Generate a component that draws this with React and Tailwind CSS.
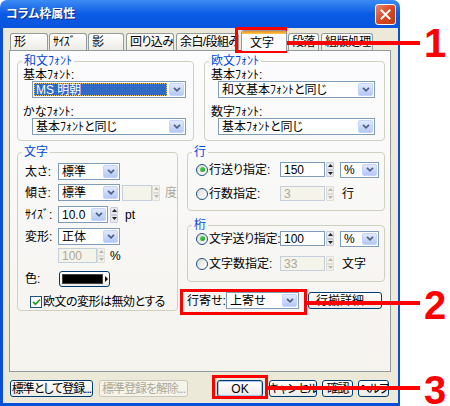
import React from 'react';

// XP-style dialog widgets, all 12px text
function Chevron() {
  return (
    <svg width="8" height="5" viewBox="0 0 8 5">
      <path d="M1 0.8 L4 3.8 L7 0.8" fill="none" stroke="#4D6185" strokeWidth="1.7" />
    </svg>
  );
}

function DropBtn() {
  return (
    <span className="flex w-[15px] shrink-0 items-center justify-center rounded-[2px] border border-[#C3D3FD] bg-gradient-to-b from-[#E1EAFE] to-[#B4C8F6]">
      <Chevron />
    </span>
  );
}

function Select({ text, className = '', selected = false }) {
  return (
    <div className={`flex border border-[#7F9DB9] bg-white p-[1px] ${className}`}>
      <span className="flex min-w-0 flex-1 items-center pr-[2px]">
        {selected ? (
          <span className="flex h-full w-full items-center bg-[#316AC5] pl-[2px] text-white outline-1 outline-dotted -outline-offset-1 outline-[#E8C56B]">
            {text}
          </span>
        ) : (
          <span className="pl-[2px]">{text}</span>
        )}
      </span>
      <DropBtn />
    </div>
  );
}

function Field({ text = '', className = '', off = false }) {
  return (
    <div
      className={`flex items-center border pl-[3px] ${
        off ? 'border-[#C3CFDD] bg-[#F5F4EA] text-[#ACA899]' : 'border-[#7F9DB9] bg-white'
      } ${className}`}
    >
      {text}
    </div>
  );
}

function Arrow({ up = false, off = false }) {
  return (
    <svg width="5" height="3" viewBox="0 0 5 3">
      <path d={up ? 'M0 3 L2.5 0 L5 3 Z' : 'M0 0 L2.5 3 L5 0 Z'} fill={off ? '#B9B7AB' : '#222'} />
    </svg>
  );
}

function Spin({ className = '', off = false }) {
  const half = off
    ? 'flex flex-1 items-center justify-center rounded-[1px] border border-[#DDDDD6] bg-[#F3F2EC]'
    : 'flex flex-1 items-center justify-center rounded-[1px] border border-[#C9CBD8] bg-[#E9EAF0]';
  return (
    <div className={`flex flex-col ${className}`}>
      <span className={half}>
        <Arrow up off={off} />
      </span>
      <span className={half}>
        <Arrow off={off} />
      </span>
    </div>
  );
}

function Radio({ on = false }) {
  return (
    <span className="flex h-[12px] w-[12px] shrink-0 items-center justify-center rounded-full border border-[#1C5180] bg-gradient-to-br from-[#DCDBD5] to-white">
      {on && <span className="h-[5px] w-[5px] rounded-full bg-gradient-to-br from-[#5BD957] to-[#1C9A1A]" />}
    </span>
  );
}

function Check() {
  return (
    <span className="flex h-[12px] w-[12px] shrink-0 items-center justify-center border border-[#1C5180] bg-white">
      <svg width="9" height="8" viewBox="0 0 9 8">
        <path d="M1 3.8 L3.5 6.3 L8 1.5" fill="none" stroke="#21A121" strokeWidth="1.8" />
      </svg>
    </span>
  );
}

function Btn({ children, className = '', off = false, def = false }) {
  const look = off
    ? 'border-[#C9C7BA] bg-[#F5F4EA] text-[#ACA899]'
    : def
    ? 'border-[#003C74] bg-gradient-to-b from-white to-[#ECEBE6] shadow-[inset_0_0_0_1px_#A9C2EE]'
    : 'border-[#003C74] bg-gradient-to-b from-white to-[#ECEBE6]';
  return (
    <div className={`flex items-center justify-center overflow-hidden rounded-[3px] border ${look} ${className}`}>
      {children}
    </div>
  );
}

function Group({ title, className = '', children }) {
  return (
    <fieldset className={`rounded-[4px] border border-[#D0D0BF] ${className}`}>
      <legend className="ml-[4px] px-[2px] leading-[12px] text-[#0046D5]">{title}</legend>
      {children}
    </fieldset>
  );
}

function Tab({ children, className = '' }) {
  return (
    <div
      className={`flex h-[17px] items-center overflow-hidden rounded-t-[3px] border border-b-0 border-[#919B9C] bg-gradient-to-b from-white to-[#ECEBE6] pl-[3px] tracking-[-0.6px] ${className}`}
    >
      {children}
    </div>
  );
}

function CloseBtn() {
  return (
    <div className="flex h-[21px] w-[21px] items-center justify-center rounded-[3px] border border-white bg-gradient-to-br from-[#E9836A] via-[#D9471F] to-[#C33B16]">
      <svg width="11" height="11" viewBox="0 0 11 11">
        <path d="M1.5 1.5 L9.5 9.5 M9.5 1.5 L1.5 9.5" stroke="white" strokeWidth="2" strokeLinecap="square" />
      </svg>
    </div>
  );
}

export default function App() {
  return (
    <div className="relative h-[406px] w-[450px] overflow-hidden whitespace-nowrap bg-white font-['Liberation_Sans','Noto_Sans_CJK_JP',sans-serif] text-[12px] leading-[12px] text-black [font-feature-settings:'palt']">
      {/* window frame */}
      <div className="flex h-[406px] w-[400px] flex-col">
        <div className="flex h-[28px] shrink-0 items-center justify-between rounded-t-[7px] bg-gradient-to-b from-[#3D8BF4] via-[#0A5BE6] to-[#0A55DC] pl-[6px] pr-[4px]">
          <span className="font-bold text-white [text-shadow:1px_1px_0_#0B2A8A]">コラム枠属性</span>
          <CloseBtn />
        </div>

        <div className="flex flex-1 bg-[#0A4FD8] pb-[3px] pl-[3px] pr-[4px]">
          <div className="flex flex-1 flex-col bg-[#ECE9D8] pl-[6px] pr-[7px] pt-[2px]">
            {/* tabs */}
            <div className="flex h-[20px] items-end pl-[1px]">
              <Tab className="w-[38px]">形</Tab>
              <Tab className="ml-[1px] w-[38px]">ｻｲｽﾞ</Tab>
              <Tab className="ml-[1px] w-[36px]">影</Tab>
              <Tab className="ml-[2px] w-[48px]">回り込み</Tab>
              <Tab className="ml-[2px] w-[63px]">余白/段組み</Tab>
              <div className="relative z-10 -mb-[1px] ml-[2px] flex h-[21px] w-[46px] flex-col overflow-hidden rounded-t-[3px] border border-b-0 border-[#919B9C] bg-[#FCFCFE]">
                <div className="h-[3px] bg-gradient-to-b from-[#E68B2C] to-[#FFC83C]" />
                <div className="flex flex-1 items-center pl-[8px]">文字</div>
              </div>
              <Tab className="ml-[1px] w-[31px]">段落</Tab>
              <Tab className="ml-[2px] w-[52px]">組版処理</Tab>
            </div>

            {/* tab page */}
            <div className="h-[322px] border border-[#919B9C] bg-gradient-to-b from-[#FCFCFE] to-[#F4F3EE] pl-[7px] pr-[5px] pt-[4px]">
              <div className="grid grid-cols-[177px_181px] gap-x-[10px]">
                <Group title="和文ﾌｫﾝﾄ">
                  <div className="pb-[5px] pl-[5px] pr-[7px]">
                    <div className="mt-[2px]">基本ﾌｫﾝﾄ:</div>
                    <Select selected text="MS 明朝" className="ml-[9px] h-[17px]" />
                    <div className="mt-[8px]">かなﾌｫﾝﾄ:</div>
                    <Select text="基本ﾌｫﾝﾄと同じ" className="ml-[9px] h-[17px]" />
                  </div>
                </Group>
                <Group title="欧文ﾌｫﾝﾄ">
                  <div className="pb-[5px] pl-[6px] pr-[9px]">
                    <div className="mt-[2px]">基本ﾌｫﾝﾄ:</div>
                    <Select text="和文基本ﾌｫﾝﾄと同じ" className="ml-[7px] h-[17px]" />
                    <div className="mt-[8px]">数字ﾌｫﾝﾄ:</div>
                    <Select text="基本ﾌｫﾝﾄと同じ" className="ml-[7px] h-[17px]" />
                  </div>
                </Group>
              </div>

              <div className="mt-[5px] flex gap-x-[9px]">
                <Group title="文字" className="w-[161px]">
                  <div className="flex flex-col pl-[7px]">
                    <div className="mt-[5px] flex h-[17px] items-center">
                      <span className="w-[33px]">太さ:</span>
                      <Select text="標準" className="h-full w-[62px]" />
                    </div>
                    <div className="mt-[4px] flex h-[17px] items-center">
                      <span className="w-[33px]">傾き:</span>
                      <Select text="標準" className="h-full w-[62px]" />
                      <Field off className="ml-[2px] h-[16px] w-[30px]" />
                      <Spin off className="h-[16px] w-[8px]" />
                      <span className="ml-[5px] text-[#ACA899]">度</span>
                    </div>
                    <div className="mt-[5px] flex h-[17px] items-center">
                      <span className="w-[33px]">ｻｲｽﾞ:</span>
                      <Select text="10.0" className="h-full w-[50px]" />
                      <Spin className="ml-[2px] h-[16px] w-[8px]" />
                      <span className="ml-[7px]">pt</span>
                    </div>
                    <div className="mt-[5px] flex h-[17px] items-center">
                      <span className="w-[33px]">変形:</span>
                      <Select text="正体" className="h-full w-[62px]" />
                    </div>
                    <div className="mt-[3px] flex h-[15px] items-center">
                      <span className="w-[33px]" />
                      <Field off text="100" className="h-full w-[39px]" />
                      <Spin off className="h-full w-[8px]" />
                      <span className="ml-[5px]">%</span>
                    </div>
                    <div className="mt-[7px] flex h-[17px] items-center">
                      <span className="w-[33px]">色:</span>
                      <div className="ml-[1px] flex h-[16px] w-[51px] items-center rounded-[3px] border border-[#003C74] bg-gradient-to-b from-white to-[#ECEBE6] pl-[2px]">
                        <span className="h-[10px] w-[41px] border border-[#444] bg-black" />
                        <svg className="ml-[2px]" width="3" height="6" viewBox="0 0 3 6">
                          <path d="M0 0 L3 3 L0 6 Z" fill="black" />
                        </svg>
                      </div>
                    </div>
                    <div className="mt-[6px] flex h-[17px] items-center pl-[5px]">
                      <Check />
                      <span className="ml-[1px] tracking-[-0.5px]">欧文の変形は無効とする</span>
                    </div>
                  </div>
                </Group>

                <div className="w-[198px]">
                  <Group title="行">
                    <div className="pb-[9px] pl-[8px]">
                      <div className="mt-[4px] flex h-[15px] items-center">
                        <Radio on />
                        <span className="ml-[1px] w-[71px]">行送り指定:</span>
                        <Field text="150" className="h-full w-[45px]" />
                        <Spin className="ml-[1px] h-full w-[8px]" />
                        <Select text="%" className="ml-[6px] h-[16px] w-[39px]" />
                      </div>
                      <div className="mt-[9px] flex h-[15px] items-center">
                        <Radio />
                        <span className="ml-[1px] w-[71px]">行数指定:</span>
                        <Field off text="3" className="h-full w-[45px]" />
                        <Spin off className="ml-[1px] h-full w-[8px]" />
                        <span className="ml-[8px]">行</span>
                      </div>
                    </div>
                  </Group>
                  <Group title="桁" className="mt-[8px]">
                    <div className="pb-[10px] pl-[8px]">
                      <div className="flex h-[15px] items-center">
                        <Radio on />
                        <span className="ml-[1px] w-[71px] tracking-[-0.3px]">文字送り指定:</span>
                        <Field text="100" className="h-full w-[45px]" />
                        <Spin className="ml-[1px] h-full w-[8px]" />
                        <Select text="%" className="ml-[6px] h-[16px] w-[39px]" />
                      </div>
                      <div className="mt-[10px] flex h-[15px] items-center">
                        <Radio />
                        <span className="ml-[1px] w-[71px]">文字数指定:</span>
                        <Field off text="33" className="h-full w-[45px]" />
                        <Spin off className="ml-[1px] h-full w-[8px]" />
                        <span className="ml-[8px]">文字</span>
                      </div>
                    </div>
                  </Group>
                  <div className="mt-[10px] flex h-[17px] items-center">
                    <span className="w-[39px]">行寄せ:</span>
                    <Select text="上寄せ" className="h-full w-[73px]" />
                    <Btn className="ml-[9px] h-full w-[74px]">行揃詳細...</Btn>
                  </div>
                </div>
              </div>
            </div>

            {/* dialog buttons */}
            <div className="mt-[8px] flex h-[17px] tracking-[-1px]">
              <Btn className="ml-[1px] w-[83px]">標準として登録...</Btn>
              <Btn off className="ml-[6px] w-[89px]">標準登録を解除...</Btn>
              <Btn def className="ml-[29px] w-[46px] tracking-normal">OK</Btn>
              <Btn className="ml-[6px] w-[48px]">キャンセル</Btn>
              <Btn className="ml-[5px] w-[31px]">確認</Btn>
              <Btn className="ml-[5px] w-[31px]">ヘルプ</Btn>
            </div>
          </div>
        </div>
      </div>

      {/* callouts */}
      <div className="absolute left-[235px] top-[27px] h-[26px] w-[52px] border-[3px] border-[#FF0000]" />
      <div className="absolute left-[287px] top-[41px] h-[4px] w-[133px] bg-[#FF0000]" />
      <div className="absolute left-[424px] top-[28px] font-['Liberation_Sans',sans-serif] text-[40px] font-bold leading-[30px] text-[#FF0000]">1</div>

      <div className="absolute left-[180px] top-[289px] h-[26px] w-[127px] border-[3px] border-[#FF0000]" />
      <div className="absolute left-[307px] top-[301px] h-[4px] w-[113px] bg-[#FF0000]" />
      <div className="absolute left-[424px] top-[290px] font-['Liberation_Sans',sans-serif] text-[40px] font-bold leading-[30px] text-[#FF0000]">2</div>

      <div className="absolute left-[212px] top-[375px] h-[24px] w-[56px] border-[3px] border-[#FF0000]" />
      <div className="absolute left-[268px] top-[386px] h-[4px] w-[152px] bg-[#FF0000]" />
      <div className="absolute left-[424px] top-[375px] font-['Liberation_Sans',sans-serif] text-[40px] font-bold leading-[30px] text-[#FF0000]">3</div>
    </div>
  );
}
